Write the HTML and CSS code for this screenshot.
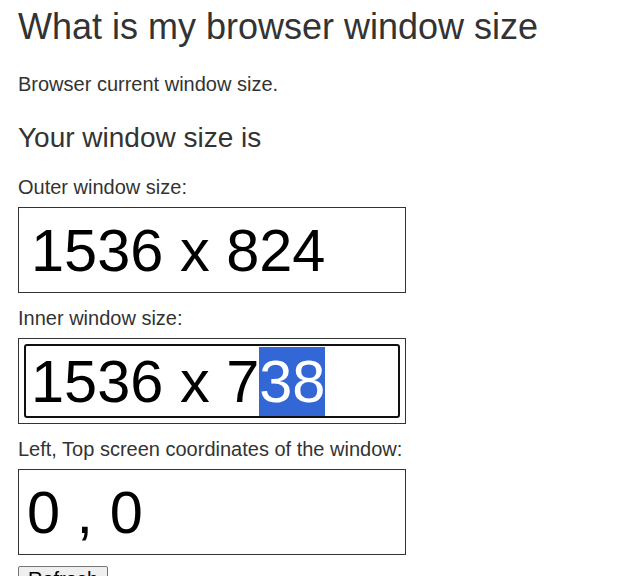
FILE: index.html
```html
<!DOCTYPE html>
<html>
<head>
<meta charset="utf-8">
<link rel="stylesheet" href="styles.css">
</head>
<body>
<main class="page">
  <h1 class="title">What is my browser window size</h1>
  <p class="intro">Browser current window size.</p>
  <h2 class="subtitle">Your window size is</h2>
  <div class="field">
    <div class="label">Outer window size:</div>
    <div class="box"><div class="value">1536 x 824</div></div>
  </div>
  <div class="field">
    <div class="label">Inner window size:</div>
    <div class="box"><div class="value focused">1536 x 7<span class="sel">38</span></div></div>
  </div>
  <div class="field">
    <div class="label">Left, Top screen coordinates of the window:</div>
    <div class="box"><div class="value coords">0 , 0</div></div>
  </div>
  <button class="refresh">Refresh</button>
</main>
</body>
</html>
```
FILE: styles.css
```css
html, body {
  margin: 0;
  padding: 0;
  background: #fff;
}
.page {
  padding: 0 18px;
  font-family: "Liberation Sans", Arial, sans-serif;
  color: #333;
}
.title {
  font-size: 36px;
  font-weight: normal;
  margin: 6px 0 0;
  line-height: 41px;
}
.intro {
  font-size: 20px;
  margin: 26px 0 0;
  line-height: 23px;
}
.subtitle {
  font-size: 28px;
  font-weight: normal;
  margin: 26px 0 0;
  line-height: 32px;
}
.field {
  display: flex;
  flex-direction: column;
  width: 388px;
}
.label {
  font-size: 20px;
  line-height: 23px;
  margin-top: 14px;
}
.subtitle + .field .label {
  margin-top: 22px;
}
.box {
  margin-top: 8px;
  height: 86px;
  box-sizing: border-box;
  border: 1px solid #333;
  padding: 5px;
  display: flex;
}
.value {
  flex: 1;
  box-sizing: border-box;
  border: 2px solid transparent;
  border-radius: 3px;
  font-size: 59.5px;
  line-height: 69px;
  padding-top: 1px;
  color: #000;
  padding-left: 5px;
  white-space: nowrap;
}
.value.coords {
  padding-left: 1px;
}
.value.focused {
  border-color: #101010;
}
.sel {
  display: inline-block;
  line-height: 69px;
  background: #3367d6;
  color: #fff;
}
.refresh {
  margin-top: 11px;
  font-family: "Liberation Sans", Arial, sans-serif;
  font-size: 20px;
  line-height: 23px;
  padding: 1px 9px;
  background: #efefef;
  border: 1px solid #767676;
  border-radius: 2px;
  color: #000;
}
```
